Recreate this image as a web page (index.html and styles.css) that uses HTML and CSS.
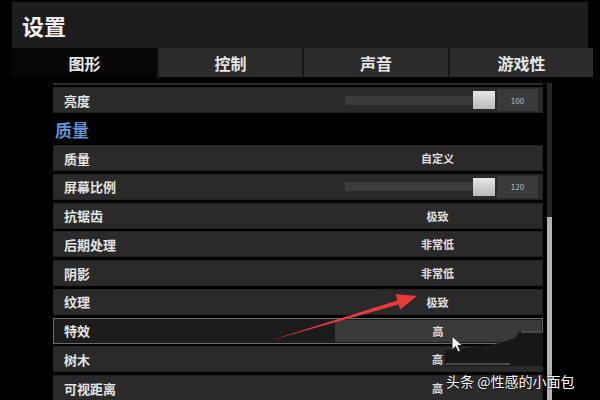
FILE: index.html
```html
<!DOCTYPE html>
<html lang="zh">
<head>
    <meta charset="UTF-8">
    <title>设置</title>
    <link rel="stylesheet" href="styles.css">
</head>
<body>
    <div class="title">设置</div>
    <div class="tabs">
        <div class="tab active">图形</div>
        <div class="tab">控制</div>
        <div class="tab">声音</div>
        <div class="tab">游戏性</div>
    </div>

    <div class="main">
        <div class="list">
            <div class="row">
                <span class="label">亮度</span>
                <div class="slider">
                    <div class="track"></div>
                    <div class="knob"></div>
                    <div class="num">100</div>
                </div>
            </div>
            <div class="section">质量</div>
            <div class="row"><span class="label">质量</span><span class="value">自定义</span></div>
            <div class="row">
                <span class="label">屏幕比例</span>
                <div class="slider">
                    <div class="track"></div>
                    <div class="knob"></div>
                    <div class="num">120</div>
                </div>
            </div>
            <div class="row"><span class="label">抗锯齿</span><span class="value">极致</span></div>
            <div class="row"><span class="label">后期处理</span><span class="value">非常低</span></div>
            <div class="row"><span class="label">阴影</span><span class="value">非常低</span></div>
            <div class="row"><span class="label">纹理</span><span class="value">极致</span></div>
            <div class="row selected"><span class="label">特效</span><span class="value">高</span></div>
            <div class="row"><span class="label">树木</span><span class="value">高</span></div>
            <div class="row"><span class="label">可视距离</span><span class="value">高</span></div>
        </div>
        <div class="scroll">
            <div class="scroll-thumb"></div>
        </div>
    </div>

    <svg class="overlay" width="600" height="400" viewBox="0 0 600 400">
        <!-- ghosting artefact behind the watermark -->
        <polygon points="520,331 543,331 543,366 445,366 445,350 470,348 500,343 515,338" fill="#171717"/>
        <line x1="521" y1="332" x2="543" y2="332" stroke="#4a4a4a" stroke-width="2"/>
        <line x1="446" y1="364" x2="510" y2="364" stroke="#4a4a4a" stroke-width="2"/>
        <!-- red arrow -->
        <polygon points="270,340.5 397.4,300.6 395.6,294.1 417,296 400.2,309.5 398.6,304.4" fill="#e83a3a"/>
        <!-- mouse pointer -->
        <path d="M452 336 L452 350 L455.5 346.5 L458 352 L460.5 351 L458 345.5 L462.5 345.5 Z" fill="#f2f2f2" stroke="#222" stroke-width="1"/>
    </svg>

    <div class="watermark">头条 @性感的小面包</div>
</body>
</html>
```

FILE: styles.css
```css
body {
    margin: 0;
    width: 600px;
    height: 400px;
    overflow: hidden;
    position: relative;
    background-color: #000;
    color: #e2e2e2;
    font-family: "Noto Sans CJK SC", "Noto Sans", sans-serif;
    font-weight: bold;
}

.title {
    margin: 2px 12px 0 12px;
    height: 46px;
    padding-left: 10px;
    background-color: #1d1d1d;
    font-size: 22px;
    line-height: 46px;
    color: #f0f0f0;
}

.tabs {
    display: grid;
    grid-template-columns: 145px 145px 146px 1fr;
    margin: 0 7px 0 12px;
    height: 29px;
}

.tab {
    display: flex;
    align-items: center;
    justify-content: center;
    background-color: #2c2c2c;
    border-left: 2px solid #151515;
    font-size: 16px;
    color: #e6e6e6;
}

.tab.active {
    background-color: #060606;
    border-left: none;
}

.main {
    display: flex;
    margin-top: 6px;
}

.list {
    margin-left: 53px;
    width: 490px;
    border-top: 2px solid #2e2e2e;
    padding-top: 2px;
    display: flex;
    flex-direction: column;
    gap: 2.75px;
}

.row {
    flex: none;
    height: 26px;
    display: flex;
    align-items: center;
    background-color: #2a2a2a;
    box-shadow: inset 0 0 0 1px #222;
}

.label {
    padding-left: 11px;
    font-size: 13px;
    color: #e4e4e4;
}

.value {
    margin-left: auto;
    margin-right: 3px;
    width: 205px;
    height: 100%;
    display: flex;
    align-items: center;
    justify-content: center;
    font-size: 11px;
    color: #e0e0e0;
}

.section {
    flex: none;
    height: 26.5px;
    display: flex;
    align-items: center;
    padding-left: 2px;
    font-size: 17px;
    color: #6293d4;
}

.row.selected {
    background-color: #1c1c1c;
    box-shadow: inset 0 0 0 1px #6c6c6c;
}

.row.selected .value {
    height: 22px;
    background-color: #3a3a3a;
    margin-right: 2px;
    width: 206px;
}

.slider {
    margin-left: auto;
    margin-right: 5px;
    display: flex;
    align-items: center;
}

.track {
    width: 128px;
    height: 9px;
    background-color: #3b3b3b;
}

.knob {
    width: 22px;
    height: 18px;
    background: linear-gradient(#e6e6e6, #b9b9b9);
}

.num {
    width: 41px;
    height: 22px;
    margin-left: 2px;
    background-color: #3a3a3a;
    color: #bdbdbd;
    font-size: 8px;
    font-weight: normal;
    display: flex;
    align-items: center;
    justify-content: center;
}

.scroll {
    margin-left: 4px;
    width: 5px;
    height: 320px;
    background-color: #262626;
    display: flex;
    flex-direction: column;
}

.scroll-thumb {
    margin-top: 134px;
    flex: 1;
    background-color: #b3b3b3;
}

.overlay {
    position: absolute;
    top: 0;
    left: 0;
}

.watermark {
    position: absolute;
    left: 446px;
    top: 371px;
    font-size: 14px;
    font-weight: normal;
    color: #fff;
    text-shadow: 0 0 2px #000, 0 0 1px #000;
}
```
